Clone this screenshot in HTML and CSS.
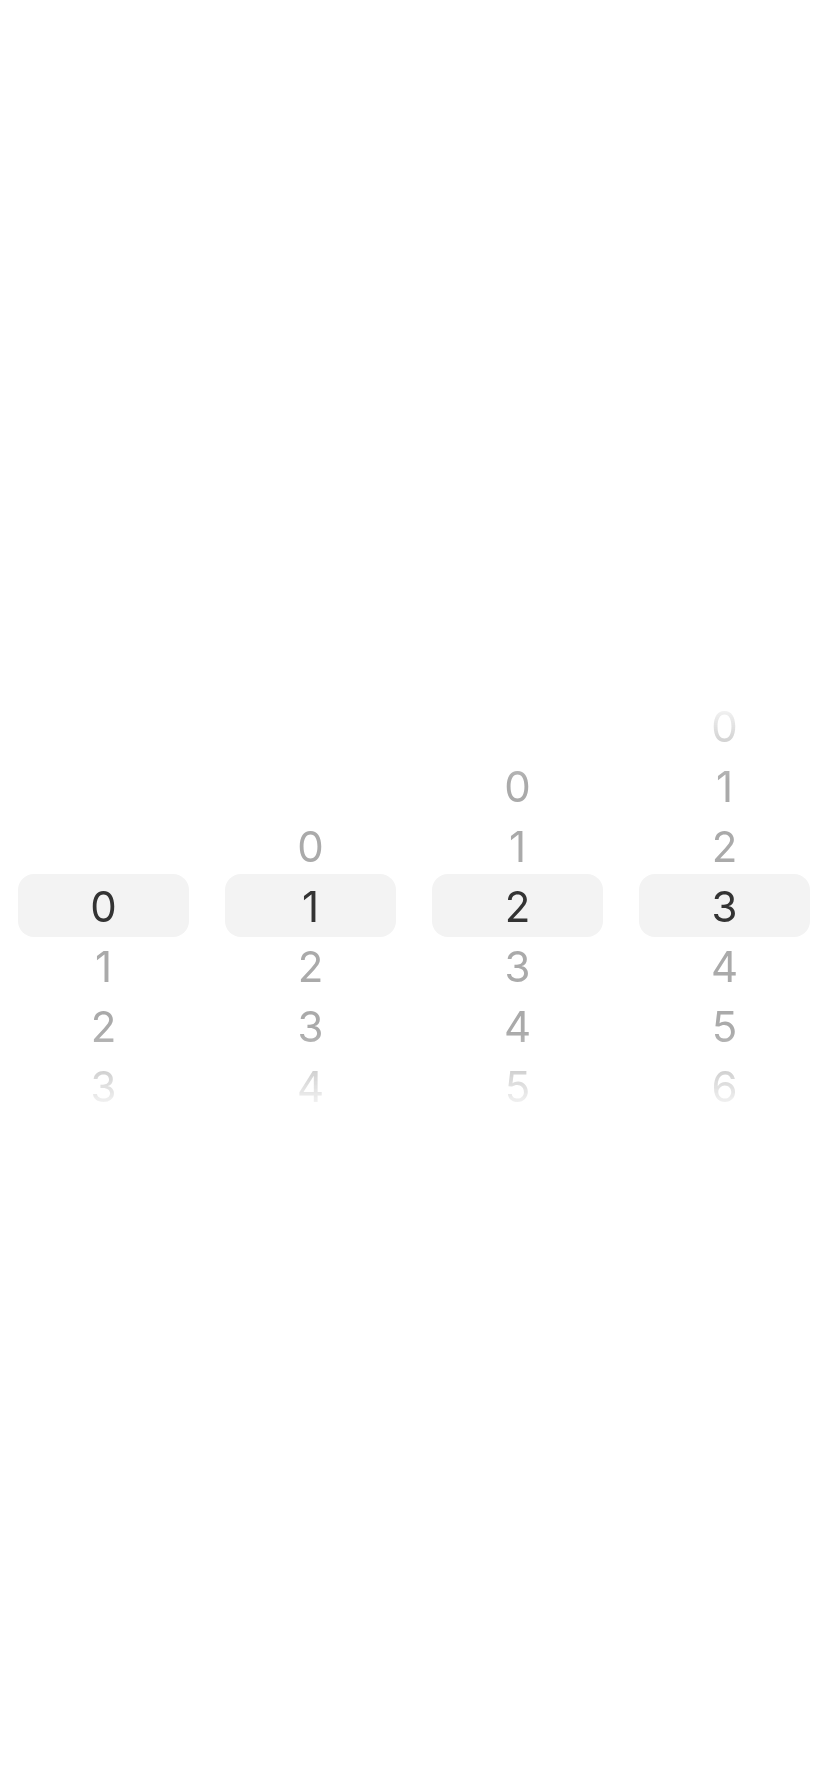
FILE: index.html
```html
<!DOCTYPE html>
<html lang="en">

<head>
    <meta charset="UTF-8">
    <meta name="viewport" content="width=device-width, initial-scale=1.0">
    <title>Picker</title>
    <link rel="stylesheet" href="styles.css">
</head>

<body>
    <div class="picker">
        <!-- each wheel shows 7 rows, the selected one in the middle -->
        <div class="wheel">
            <ul class="wheelList" style="margin-top: 180px">
                <li class="selected">0</li>
                <li>1</li>
                <li>2</li>
                <li>3</li>
            </ul>
        </div>
        <div class="wheel">
            <ul class="wheelList" style="margin-top: 120px">
                <li>0</li>
                <li class="selected">1</li>
                <li>2</li>
                <li>3</li>
                <li>4</li>
            </ul>
        </div>
        <div class="wheel">
            <ul class="wheelList" style="margin-top: 60px">
                <li>0</li>
                <li>1</li>
                <li class="selected">2</li>
                <li>3</li>
                <li>4</li>
                <li>5</li>
            </ul>
        </div>
        <div class="wheel">
            <ul class="wheelList" style="margin-top: 0px">
                <li>0</li>
                <li>1</li>
                <li>2</li>
                <li class="selected">3</li>
                <li>4</li>
                <li>5</li>
                <li>6</li>
            </ul>
        </div>
    </div>
</body>

</html>
```
FILE: styles.css
```css
html,
body {
    margin: 0;
    padding: 0;
    background: #fff;
}

body {
    font-family: Inter, "Noto Sans", sans-serif;
    min-height: 100vh;
    display: flex;
    align-items: center;
    padding-top: 22px;
    box-sizing: border-box;
}

.picker {
    width: 100%;
    display: grid;
    grid-template-columns: repeat(4, 1fr);
}

.wheel {
    height: 420px;
    overflow: hidden;
    -webkit-mask-image: linear-gradient(to bottom, transparent 0, #000 85px, #000 335px, transparent 420px);
    mask-image: linear-gradient(to bottom, transparent 0, #000 85px, #000 335px, transparent 420px);
}

.wheelList {
    list-style: none;
    margin: 0;
    padding: 0;
}

.wheelList li {
    height: 60px;
    line-height: 60px;
    text-align: center;
    font-size: 42px;
    color: #aaaaaa;
}

.wheelList li.selected {
    margin: -3px 18px 0;
    padding-top: 3px;
    color: #333;
    background: #f3f3f3;
    border-radius: 16px;
}
```
